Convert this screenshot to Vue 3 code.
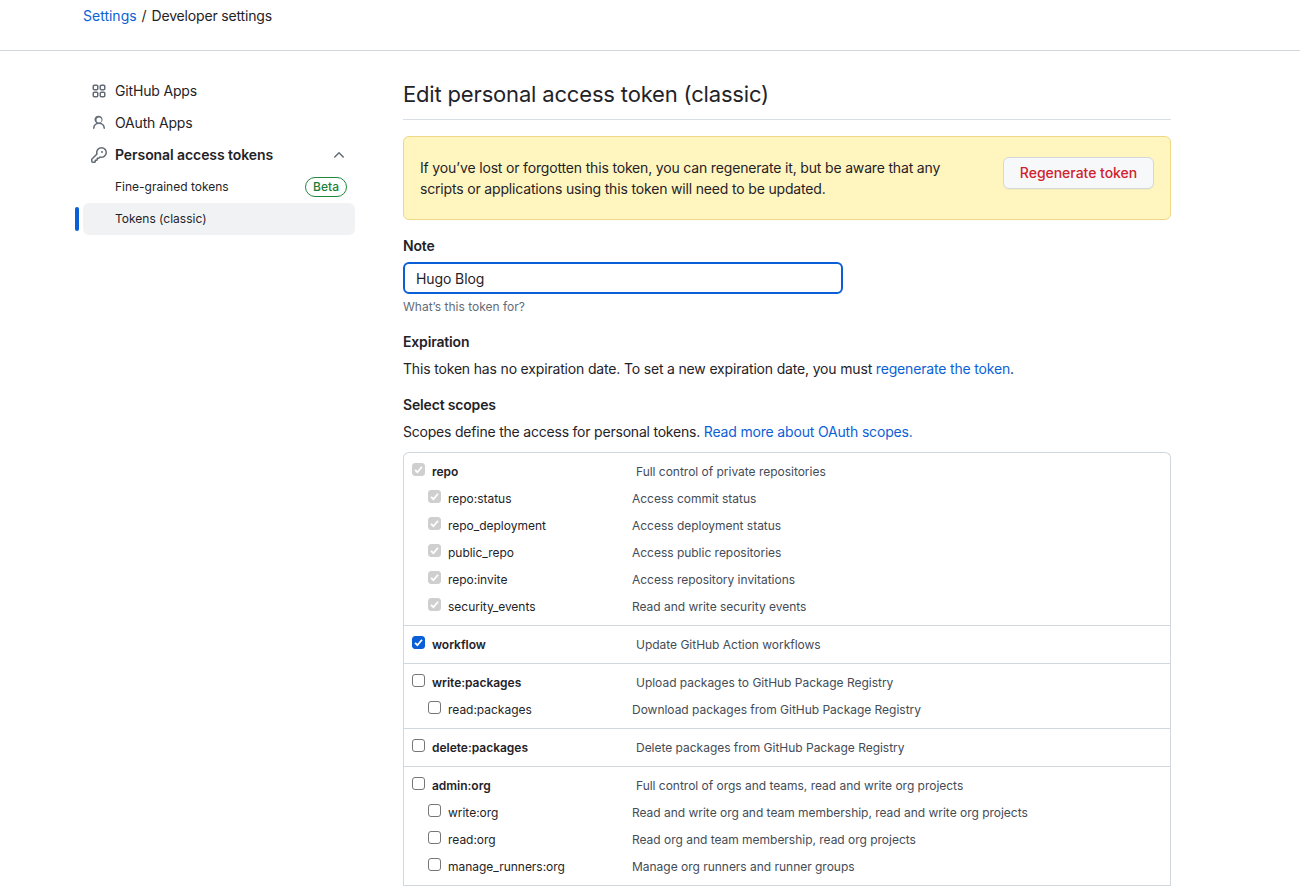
<template>
  <div class="page">
    <header class="topbar">
      <nav class="crumbs">
        <a href="#">Settings</a>
        <span class="sep">/</span>
        <span>Developer settings</span>
      </nav>
    </header>

    <div class="layout">
      <aside class="sidebar">
        <a class="side-item" href="#">
          <svg viewBox="0 0 16 16" width="16" height="16"><path d="M1.5 3.25c0-.966.784-1.75 1.75-1.75h2.5c.966 0 1.75.784 1.75 1.75v2.5A1.75 1.75 0 0 1 5.75 7.5h-2.5A1.75 1.75 0 0 1 1.5 5.75Zm7 0c0-.966.784-1.75 1.75-1.75h2.5c.966 0 1.75.784 1.75 1.75v2.5a1.75 1.75 0 0 1-1.75 1.75h-2.5A1.75 1.75 0 0 1 8.5 5.75Zm-7 7c0-.966.784-1.75 1.75-1.75h2.5c.966 0 1.75.784 1.75 1.75v2.5a1.75 1.75 0 0 1-1.75 1.75h-2.5a1.75 1.75 0 0 1-1.75-1.75Zm7 0c0-.966.784-1.75 1.75-1.75h2.5c.966 0 1.75.784 1.75 1.75v2.5a1.75 1.75 0 0 1-1.75 1.75h-2.5a1.75 1.75 0 0 1-1.75-1.75ZM3.25 3a.25.25 0 0 0-.25.25v2.5c0 .138.112.25.25.25h2.5A.25.25 0 0 0 6 5.75v-2.5A.25.25 0 0 0 5.75 3Zm7 0a.25.25 0 0 0-.25.25v2.5c0 .138.112.25.25.25h2.5a.25.25 0 0 0 .25-.25v-2.5a.25.25 0 0 0-.25-.25ZM3 10.25v2.5c0 .138.112.25.25.25h2.5a.25.25 0 0 0 .25-.25v-2.5a.25.25 0 0 0-.25-.25h-2.5a.25.25 0 0 0-.25.25Zm7.25-.25a.25.25 0 0 0-.25.25v2.5c0 .138.112.25.25.25h2.5a.25.25 0 0 0 .25-.25v-2.5a.25.25 0 0 0-.25-.25Z"/></svg>
          <span class="side-label">GitHub Apps</span>
        </a>
        <a class="side-item" href="#">
          <svg viewBox="0 0 16 16" width="16" height="16"><path d="M10.561 8.073a6.005 6.005 0 0 1 3.432 5.142.75.75 0 1 1-1.498.07 4.5 4.5 0 0 0-8.99 0 .75.75 0 0 1-1.498-.07 6.004 6.004 0 0 1 3.431-5.142 3.999 3.999 0 1 1 4.123 0ZM10.5 5a2.5 2.5 0 1 0-5 0 2.5 2.5 0 0 0 5 0Z"/></svg>
          <span class="side-label">OAuth Apps</span>
        </a>
        <a class="side-item strong" href="#">
          <svg viewBox="0 0 16 16" width="16" height="16"><path d="M10.5 0a5.499 5.499 0 1 1-1.288 10.848l-.932.932a.749.749 0 0 1-.53.22H7v.75a.749.749 0 0 1-.22.53l-.5.5a.749.749 0 0 1-.53.22H5v.75a.749.749 0 0 1-.22.53l-.5.5a.749.749 0 0 1-.53.22h-2A1.75 1.75 0 0 1 0 14.25v-2c0-.199.079-.389.22-.53l4.932-4.932A5.5 5.5 0 0 1 10.5 0Zm-4 5.5c-.001.431.069.86.205 1.269a.75.75 0 0 1-.181.768L1.5 12.56v1.69c0 .138.112.25.25.25h1.69l.06-.06v-1.19a.75.75 0 0 1 .75-.75h1.19l.06-.06v-1.19a.75.75 0 0 1 .75-.75h1.19l1.023-1.025a.75.75 0 0 1 .768-.18A4 4 0 1 0 6.5 5.5ZM11 6a1 1 0 1 1 0-2 1 1 0 0 1 0 2Z"/></svg>
          <span class="side-label grow">Personal access tokens</span>
          <svg viewBox="0 0 16 16" width="16" height="16"><path d="M3.22 10.53a.749.749 0 0 1 0-1.06l4.25-4.25a.749.749 0 0 1 1.06 0l4.25 4.25a.749.749 0 1 1-1.06 1.06L8 6.811 4.28 10.53a.749.749 0 0 1-1.06 0Z"/></svg>
        </a>
        <a class="side-item sub" href="#">
          <span class="side-label grow">Fine-grained tokens</span>
          <span class="beta">Beta</span>
        </a>
        <a class="side-item sub active" href="#">
          <span class="side-label">Tokens (classic)</span>
        </a>
      </aside>

      <main class="content">
        <h1 class="title">Edit personal access token (classic)</h1>

        <div class="flash">
          <p>If you’ve lost or forgotten this token, you can regenerate it, but be aware that any scripts or applications using this token will need to be updated.</p>
          <button class="regen" type="button">Regenerate token</button>
        </div>

        <label class="field-label note-label" for="note">Note</label>
        <input id="note" class="note-input" type="text" value="Hugo Blog" />
        <div class="hint">What’s this token for?</div>

        <div class="field-label expiration-label">Expiration</div>
        <p class="copy">This token has no expiration date. To set a new expiration date, you must <a href="#">regenerate the token</a>.</p>

        <div class="field-label scopes-label">Select scopes</div>
        <p class="copy scopes-copy">Scopes define the access for personal tokens. <a href="#">Read more about OAuth scopes.</a></p>

        <div class="scopes">
          <div v-for="group in scopeGroups" :key="group.name" class="scope-group">
            <div class="scope-row parent">
              <span class="check" :class="checkClass(group)">
                <svg v-if="group.checked" viewBox="0 0 12 12" width="11" height="11"><path d="M2.2 6.3 4.8 9l5-6" fill="none" stroke-width="2"/></svg>
              </span>
              <span class="scope-name">{{ group.name }}</span>
              <span class="scope-desc">{{ group.desc }}</span>
            </div>
            <div v-for="child in group.children" :key="child.name" class="scope-row child">
              <span class="check" :class="checkClass(group)">
                <svg v-if="group.checked" viewBox="0 0 12 12" width="11" height="11"><path d="M2.2 6.3 4.8 9l5-6" fill="none" stroke-width="2"/></svg>
              </span>
              <span class="scope-name">{{ child.name }}</span>
              <span class="scope-desc">{{ child.desc }}</span>
            </div>
          </div>
        </div>
      </main>
    </div>
  </div>
</template>

<script setup>
const scopeGroups = [
  {
    name: 'repo',
    desc: 'Full control of private repositories',
    checked: true,
    locked: true,
    children: [
      { name: 'repo:status', desc: 'Access commit status' },
      { name: 'repo_deployment', desc: 'Access deployment status' },
      { name: 'public_repo', desc: 'Access public repositories' },
      { name: 'repo:invite', desc: 'Access repository invitations' },
      { name: 'security_events', desc: 'Read and write security events' },
    ],
  },
  { name: 'workflow', desc: 'Update GitHub Action workflows', checked: true, children: [] },
  {
    name: 'write:packages',
    desc: 'Upload packages to GitHub Package Registry',
    children: [{ name: 'read:packages', desc: 'Download packages from GitHub Package Registry' }],
  },
  { name: 'delete:packages', desc: 'Delete packages from GitHub Package Registry', children: [] },
  {
    name: 'admin:org',
    desc: 'Full control of orgs and teams, read and write org projects',
    children: [
      { name: 'write:org', desc: 'Read and write org and team membership, read and write org projects' },
      { name: 'read:org', desc: 'Read org and team membership, read org projects' },
      { name: 'manage_runners:org', desc: 'Manage org runners and runner groups' },
    ],
  },
]

function checkClass(group) {
  if (group.locked) return 'locked'
  return group.checked ? 'on' : ''
}
</script>

<style>
html,
body {
  margin: 0;
  background: #fff;
  overflow: hidden;
}
</style>

<style scoped>
.page {
  height: 886px;
  overflow: hidden;
  font-family: Inter, "Liberation Sans", sans-serif;
  font-size: 14px;
  letter-spacing: -0.17px;
  color: #1f2328;
}

a {
  color: #0b5fd6;
  text-decoration: none;
}

p {
  margin: 0;
}

.topbar {
  height: 50px;
  padding-left: 83px;
  border-bottom: 1px solid #d0d7de;
}

.crumbs {
  display: flex;
  gap: 5px;
  line-height: 32px;
}

.crumbs a {
  letter-spacing: 0;
}

.layout {
  display: flex;
  padding: 24px 0 0 83px;
}

.sidebar {
  width: 272px;
  flex-shrink: 0;
  margin-right: 48px;
}

.side-item {
  position: relative;
  display: flex;
  align-items: center;
  gap: 8px;
  height: 32px;
  padding: 0 8px;
  color: #1f2328;
  border-radius: 6px;
}

.side-item svg {
  fill: #636c76;
}

.side-label {
  padding-bottom: 2px;
}

.side-item.strong {
  font-weight: 600;
  letter-spacing: -0.08px;
}

.grow {
  flex: 1;
}

.sub {
  padding-left: 32px;
  font-size: 12px;
  letter-spacing: 0;
}

.sub.active {
  background: #f1f2f4;
}

.sub.active::before {
  content: "";
  position: absolute;
  left: -8px;
  top: 4px;
  width: 4px;
  height: 24px;
  border-radius: 6px;
  background: #0b5fd6;
}

.beta {
  padding: 0 7px;
  font-size: 12px;
  font-weight: 500;
  line-height: 18px;
  color: #1a7f37;
  border: 1px solid #1f883d;
  border-radius: 2em;
}

.content {
  width: 768px;
}

.title {
  margin: 0 0 16px;
  padding: 1px 0 7px;
  font-size: 22px;
  font-weight: 400;
  letter-spacing: -0.17px;
  line-height: 36px;
  border-bottom: 1px solid #d8dee4;
}

.flash {
  display: flex;
  align-items: flex-start;
  justify-content: space-between;
  padding: 20px 16px;
  line-height: 21px;
  background: #fff5bf;
  border: 1px solid #eed888;
  border-radius: 6px;
}

.flash p {
  width: 540px;
}

.regen {
  width: 151px;
  height: 32px;
  padding: 0 0 1px;
  font: 500 14px Inter, "Liberation Sans", sans-serif;
  letter-spacing: -0.03px;
  color: #cf222e;
  background: #f6f8fa;
  border: 1px solid #d5d8da;
  border-radius: 6px;
  box-shadow: 0 1px 0 rgba(31, 35, 40, 0.04);
}

.field-label {
  display: block;
  font-weight: 600;
  line-height: 20px;
}

.note-label {
  margin-top: 16px;
}

.note-input {
  display: block;
  box-sizing: border-box;
  width: 440px;
  height: 32px;
  margin-top: 6px;
  padding: 0 11px;
  font: 14px Inter, "Liberation Sans", sans-serif;
  letter-spacing: -0.1px;
  color: #1f2328;
  border: 2px solid #0b5fd6;
  border-radius: 6px;
  outline: none;
}

.hint {
  margin-top: 4px;
  font-size: 12px;
  letter-spacing: 0;
  line-height: 18px;
  color: #636c76;
}

.expiration-label {
  margin-top: 16px;
}

.copy {
  margin-top: 6px;
  line-height: 21px;
}

.scopes-copy {
  letter-spacing: -0.21px;
}

.scopes-copy a {
  letter-spacing: -0.17px;
}

.scopes-label {
  margin-top: 16px;
}

.scopes {
  margin-top: 10px;
  border: 1px solid #d0d7de;
  border-bottom: 0;
  border-radius: 6px 6px 0 0;
}

.scope-group {
  padding: 5px 0;
  border-bottom: 1px solid #d0d7de;
}

.scope-row {
  display: flex;
  align-items: center;
  height: 27px;
  font-size: 12px;
  letter-spacing: -0.02px;
}

.scope-row.parent {
  padding-left: 8px;
}

.scope-row.child {
  padding-left: 24px;
}

.check {
  display: flex;
  align-items: center;
  justify-content: center;
  box-sizing: border-box;
  flex-shrink: 0;
  width: 13px;
  height: 13px;
  margin-top: -4px;
  background: #fff;
  border: 1px solid #767676;
  border-radius: 3px;
}

.check svg {
  stroke: #fff;
}

.check.on {
  background: #0b5fd6;
  border-color: #0b5fd6;
}

.check.locked {
  background: #cfcfcf;
  border-color: #cfcfcf;
}

.scope-name {
  flex-shrink: 0;
  margin-left: 7px;
}

.parent .scope-name {
  width: 204px;
  font-weight: 600;
}

.child .scope-name {
  width: 184px;
}

.scope-desc {
  color: #444c56;
}
</style>
